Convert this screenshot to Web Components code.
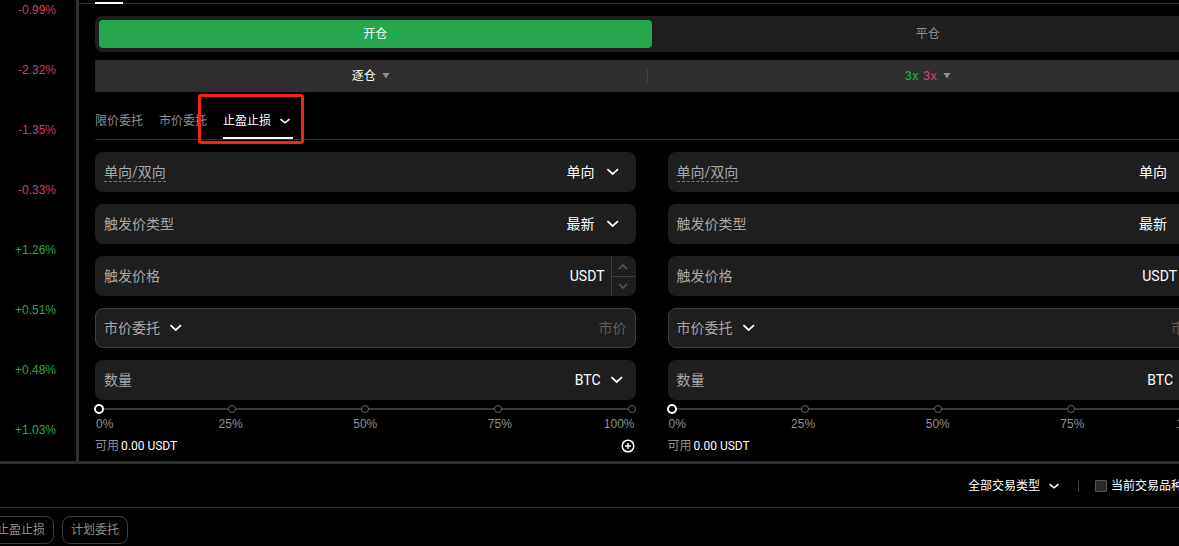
<!DOCTYPE html>
<html lang="zh-CN">
<head>
<meta charset="utf-8">
<title>合约交易</title>
<style>
  html { background: #000; }
  body {
    margin: 0;
    overflow-x: hidden;
    color: #fff;
    font: 12px/16px Roboto, "Noto Sans CJK SC", sans-serif;
    --up: #25a750;
    --down: #ca3f64;
    --muted: #909090;
    --label: #a8a8a8;
    --line: #303030;
    --edge: #3d3d3d;
    --surface: #1e1e1e;
  }
</style>
</head>
<body>
<trade-page></trade-page>

<script>
const RESET = `
  * { box-sizing: border-box; }
  button, select, input { margin: 0; padding: 0; border: 0; background: none; color: inherit; font: inherit; border-radius: 0; outline: 0; }
  select { appearance: none; field-sizing: content; }
  svg { display: block; flex: none; pointer-events: none; }
`;
const define = (name, css, html, setup) => {
  customElements.define(name, class extends HTMLElement {
    connectedCallback() {
      if (this.shadowRoot) return;
      const root = this.attachShadow({ mode: 'open' });
      root.innerHTML = `<style>${RESET}${css}</style>${typeof html === 'function' ? html(this) : html}`;
      if (setup) setup(this, root);
    }
  });
};
const chevron = '<svg width="16" height="16" viewBox="0 0 16 16" fill="none" stroke="#fff" stroke-width="1.7"><path d="M2.4 5.2 7.7 10l5.3-4.8"/></svg>';
const smallChevron = '<svg width="16" height="16" viewBox="0 0 16 16" fill="none" stroke="#fff" stroke-width="1.6"><path d="M3.5 6.2 8 9.8l4.5-3.6"/></svg>';
const caret = '<svg width="8" height="6" viewBox="0 0 8 6"><path fill="#909090" d="M.5 0h7L4 5.5z"/></svg>';

define('price-changes', `
  :host { display: block; overflow: hidden; }
  ul { list-style: none; margin: -20px 0 0; padding: 0 20px 0 0; font-family: "Liberation Sans", sans-serif; text-align: right; }
  li { height: 60px; line-height: 60px; color: var(--up); }
  .down { color: var(--down); }
`, () => `<ul>${['-0.99%', '-2.32%', '-1.35%', '-0.33%', '+1.26%', '+0.51%', '+0.48%', '+1.03%']
  .map(v => `<li class="${v[0] === '-' ? 'down' : 'up'}">${v}</li>`).join('')}</ul>`);

define('panel-strip', `
  :host { display: block; height: 4px; padding: 2px 16px 0; background: linear-gradient(var(--line), var(--line)) bottom / 100% 1px no-repeat; }
  i { display: block; width: 28px; height: 2px; background: #fff; }
`, '<i></i>');

define('side-switch', `
  :host { display: flex; height: 36px; padding: 4px; border-radius: 8px; background: var(--surface); }
  button { flex: 1; border-radius: 4px; color: var(--muted); }
  .on { background: var(--up); color: #fff; }
`, '<button class="on" type="button">开仓</button><button type="button">平仓</button>');

define('margin-bar', `
  :host { display: flex; align-items: center; height: 32px; border-radius: 1px; background: #2e2e2e; }
  button { flex: 1; display: flex; align-items: center; justify-content: center; gap: 6px; height: 32px; }
  .mode { flex: none; width: calc(50% - 5px); }
  i { width: 1px; height: 12px; background: #444; }
  .lev { display: flex; gap: 4px; font-family: Inter, sans-serif; font-weight: 500; }
  .long { color: var(--up); } .short { color: var(--down); }
`, `<button class="mode" type="button">逐仓 ${caret}</button><i></i>
    <button type="button"><span class="lev"><span class="long">3x</span><span class="short">3x</span></span>${caret}</button>`);

define('order-tabs', `
  :host { display: flex; gap: 16px; border-bottom: 1px solid var(--line); }
  button { position: relative; display: flex; align-items: center; gap: 6px; height: 39px; padding-top: 2px; color: var(--muted); }
  .on { color: #fff; box-shadow: inset 0 -2px #fff; }
  .mark { position: absolute; inset: -6px -11px -5px -25px; border: 3px solid #fb2014; border-radius: 3px; }
`, `<button type="button">限价委托</button><button type="button">市价委托</button>
    <button class="on" type="button">止盈止损 ${smallChevron}<span class="mark"></span></button>`);

define('field-box', `
  :host { display: flex; align-items: center; height: 40px; padding: 0 14px 0 8px; border: 1px solid transparent; border-radius: 8px; background: var(--surface); font-size: 14px; line-height: 20px; overflow: hidden; }
  :host([outlined]) { border-color: var(--edge); padding-right: 8px; }
  :host([kind="amount"]) { padding-right: 10px; }
  :host([kind="price"]) { padding-right: 0; }
  label, .type { color: var(--label); }
  .hint { height: 20px; border-bottom: 1px dashed #777; }
  input { flex: 1; min-width: 0; text-align: right; height: 20px; }
  input::placeholder { color: #5c5c5c; opacity: 1; }
  .gap { flex: 1; }
  svg { margin-left: 10px; }
  .type + svg, :host([kind="amount"]) svg { margin-left: 8px; }
  .unit { padding-right: 6px; }
  .step { align-self: stretch; width: 24px; display: grid; grid-template-rows: 19px 19px; border-left: 1px solid var(--edge); }
  .step button { display: grid; place-items: center; }
  .step button + button { border-top: 1px solid var(--edge); }
  .step svg { margin: 0; }
`, host => {
  const label = host.getAttribute('label'), value = host.getAttribute('value');
  const lab = `<label for="f"${host.hasAttribute('hint') ? ' class="hint"' : ''}>${label}</label>`;
  switch (host.getAttribute('kind')) {
    case 'price': return `${lab}<input id="f" inputmode="decimal"><span class="unit">${value}</span>
      <span class="step"><button type="button" aria-label="增加"><svg width="10" height="6" viewBox="0 0 10 6" fill="none" stroke="#5c5c5c" stroke-width="1.3"><path d="m1 5 4-4 4 4"/></svg></button><button type="button" aria-label="减少"><svg width="10" height="6" viewBox="0 0 10 6" fill="none" stroke="#5c5c5c" stroke-width="1.3"><path d="m1 1 4 4 4-4"/></svg></button></span>`;
    case 'type': return `<select class="type" aria-label="${label}"><option>${label}</option></select>${chevron}<input disabled aria-label="${value}" placeholder="${value}">`;
    case 'amount': return `${lab}<input id="f" inputmode="decimal"><select aria-label="单位"><option>${value}</option></select>${chevron}`;
    default: return `${lab}<span class="gap"></span><select id="f"><option>${value}</option></select>${chevron}`;
  }
});

define('percent-slider', `
  :host { display: block; }
  .rail { position: relative; height: 10px; display: flex; align-items: center; justify-content: space-between; background: linear-gradient(#3a3a3a, #3a3a3a) center / calc(100% - 8px) 2px no-repeat; }
  i { width: 8px; height: 8px; border: 1px solid #666; border-radius: 50%; background: #000; }
  input { position: absolute; inset: 0 -1px; width: calc(100% + 2px); height: 10px; appearance: none; }
  input::-webkit-slider-thumb { appearance: none; width: 10px; height: 10px; border: 2px solid #fff; border-radius: 50%; background: #000; }
  .marks { display: grid; grid-template-columns: 1fr 2fr 2fr 2fr 1fr; margin-top: 2px; padding: 0 1px; color: var(--muted); font-family: "Liberation Sans", sans-serif; text-align: center; }
  .marks :first-child { text-align: left; } .marks :last-child { text-align: right; }
`, `<div class="rail"><i></i><i></i><i></i><i></i><i></i><input type="range" min="0" max="100" value="0" aria-label="仓位比例"></div>
    <div class="marks"><span>0%</span><span>25%</span><span>50%</span><span>75%</span><span>100%</span></div>`);

define('available-row', `
  :host { display: flex; align-items: center; height: 16px; padding-right: 1px; }
  span { color: var(--muted); margin-right: 2px; }
  b { flex: 1; font-weight: 400; }
`, `<span>可用</span><b><slot></slot></b><button type="button" aria-label="划转"><svg width="14" height="14" viewBox="0 0 14 14" fill="none" stroke="#fff" stroke-width="1.5"><circle cx="7" cy="7" r="5.8"/><path d="M7 4v6M4 7h6"/></svg></button>`);

define('order-form', `
  :host { display: block; min-width: 0; }
  .fields { display: grid; gap: 12px; }
  percent-slider { margin: 4px 0 6px; }
`, `<div class="fields">
      <field-box label="单向/双向" value="单向" hint></field-box>
      <field-box label="触发价类型" value="最新"></field-box>
      <field-box kind="price" label="触发价格" value="USDT"></field-box>
      <field-box kind="type" label="市价委托" value="市价" outlined></field-box>
      <field-box kind="amount" label="数量" value="BTC"></field-box>
    </div>
    <percent-slider></percent-slider>
    <available-row>0.00 USDT</available-row>`);

define('trade-panel', `
  :host { display: block; border-left: 3px solid var(--line); min-width: 0; }
  main { padding: 12px 16px 7px; }
  margin-bar, order-tabs { margin-top: 8px; }
  .forms { display: grid; grid-template-columns: 1fr 1fr; gap: 32px; margin-top: 12px; }
`, `<panel-strip></panel-strip><main><side-switch></side-switch><margin-bar></margin-bar><order-tabs></order-tabs>
    <div class="forms"><order-form></order-form><order-form></order-form></div></main>`);

define('orders-toolbar', `
  :host { display: flex; align-items: center; justify-content: flex-end; height: 44px; margin-right: -4px; border-bottom: 1px solid var(--line); }
  svg { margin-left: 6px; }
  i { width: 1px; height: 12px; margin: 0 16px; background: var(--edge); }
  label { display: flex; align-items: center; gap: 4px; white-space: nowrap; }
  input { appearance: none; width: 12px; height: 12px; border: 1px solid #555; border-radius: 1px; background: #2a2a2a; }
`, `<select aria-label="交易类型"><option>全部交易类型</option></select>${smallChevron}<i></i>
    <label><input type="checkbox">当前交易品种</label>`);

define('order-filters', `
  :host { display: flex; gap: 8px; margin-left: -12px; padding: 8px 0 2px; }
  button { height: 28px; padding: 0 8px; border: 1px solid var(--edge); border-radius: 8px; color: var(--muted); }
`, '<button type="button">止盈止损</button><button type="button">计划委托</button>');

define('trade-page', `
  :host { display: block; overflow: hidden; }
  .top { display: grid; grid-template-columns: 76px 1fr; width: calc(100% + 45px); border-bottom: 3px solid var(--line); }
`, `<div class="top"><price-changes></price-changes><trade-panel></trade-panel></div>
    <orders-toolbar></orders-toolbar><order-filters></order-filters>`);
</script>
</body>
</html>
